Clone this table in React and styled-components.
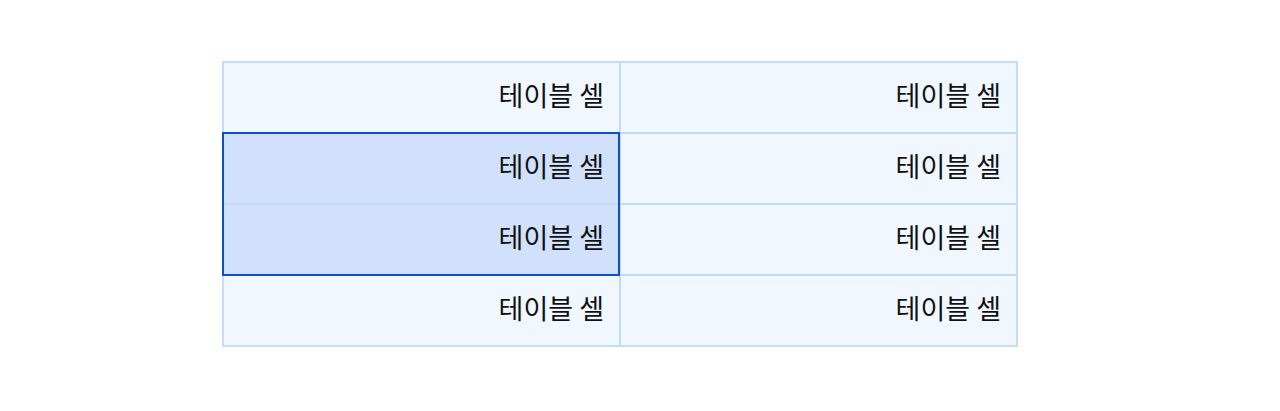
import React from "react";
import styled, { createGlobalStyle } from "styled-components";

const Global = createGlobalStyle`
  html, body { margin: 0; padding: 0; background: #ffffff; }
  body { font-family: "Noto Sans CJK KR", "Noto Sans", sans-serif; }
`;

const Page = styled.div`
  padding: 61px 0 0 222px;
`;

const Grid = styled.div`
  box-sizing: border-box;
  width: 796px;
  display: grid;
  grid-template-columns: 1fr 1fr;
  grid-auto-rows: 69px;
  gap: 2px;
  background: #c0dafc;
  border: 2px solid #c4ddfc;
`;

const Cell = styled.div`
  grid-column: ${(p) => p.$col};
  grid-row: ${(p) => p.$row};
  display: flex;
  align-items: center;
  justify-content: flex-end;
  padding: 0 15px 6px 16px;
  background: ${(p) => (p.$selected ? "#d1e1fb" : "#f0f7ff")};
  color: #111111;
  font-size: 27px;
`;

const Selection = styled.div`
  grid-column: ${(p) => p.$col};
  grid-row: ${(p) => p.$rows};
  margin: -2px -1px -2px -2px;
  border: 2px solid #0a50c8;
  pointer-events: none;
`;

const rows = [0, 1, 2, 3];
const cols = [0, 1];
const isSelected = (r, c) => c === 0 && (r === 1 || r === 2);

export default function App() {
  return (
    <>
      <Global />
      <Page>
        <Grid>
          {rows.map((r) =>
            cols.map((c) => (
              <Cell key={`${r}-${c}`} $row={r + 1} $col={c + 1} $selected={isSelected(r, c)}>
                테이블 셀
              </Cell>
            ))
          )}
          <Selection $col={1} $rows="2 / 4" />
        </Grid>
      </Page>
    </>
  );
}
